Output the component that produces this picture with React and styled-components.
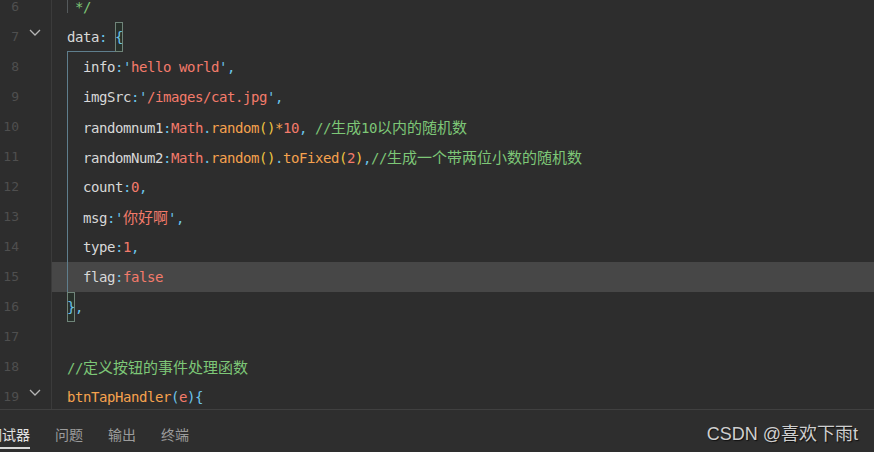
import React from 'react';
import styled, { createGlobalStyle, css } from 'styled-components';

const GlobalStyle = createGlobalStyle`
  html, body {
    margin: 0;
    padding: 0;
    background: #2d2d2d;
  }
  body {
    width: 874px;
    height: 452px;
    overflow: hidden;
  }
`;

const palette = {
  plain: '#d8d8d8',
  punct: '#6cc4ea',
  str: '#f47b6b',
  fn: '#f6a24e',
  paren: '#f0c640',
  comment: '#7dc777',
};

const Screen = styled.div`
  display: flex;
  flex-direction: column;
  height: 452px;
  background: #2d2d2d;
`;

const Editor = styled.div`
  height: 409px;
  overflow: hidden;
`;

const Lines = styled.div`
  margin-top: -8px;
`;

const Row = styled.div`
  display: flex;
  height: 30px;
`;

const Gutter = styled.div`
  display: flex;
  width: 51px;
  border-right: 1px solid #3b3b3b;
`;

const LineNo = styled.span`
  width: 19px;
  text-align: right;
  font-family: 'DejaVu Sans Mono', monospace;
  font-size: 13px;
  line-height: 30px;
  color: #4f4f4f;
`;

const Fold = styled.span`
  flex: 1;
  display: flex;
  justify-content: center;
  padding-top: 7px;
`;

const Code = styled.div`
  flex: 1;
  position: relative;
  padding-left: 15px;
  font-family: 'DejaVu Sans Mono', monospace;
  font-size: 14px;
  letter-spacing: -0.43px;
  line-height: 30px;
  white-space: pre;
  color: ${palette.plain};
  background: ${(p) => (p.$active ? '#474747' : 'transparent')};

  ${(p) =>
    p.$guide === 'full' &&
    css`
      &::before {
        content: '';
        position: absolute;
        left: 15px;
        top: 0;
        bottom: 0;
        width: 1px;
        background: #5f7e8d;
      }
    `}

  ${(p) =>
    p.$guide === 'short' &&
    css`
      &::before {
        content: '';
        position: absolute;
        left: 15px;
        top: 0;
        bottom: 9px;
        width: 1px;
        background: #555a5c;
      }
    `}

  ${(p) =>
    p.$guide === 'elbow' &&
    css`
      &::before {
        content: '';
        position: absolute;
        left: 15px;
        bottom: 0;
        width: 48px;
        height: 1px;
        background: #5f7e8d;
      }
    `}
`;

const Tok = styled.span`
  color: ${(p) => palette[p.$c] || palette.plain};
`;

const Cjk = styled.span`
  font-family: 'Noto Sans CJK SC', sans-serif;
  font-size: 15px;
  letter-spacing: 0;
`;

const Bracket = styled.span`
  display: inline-block;
  vertical-align: top;
  box-sizing: border-box;
  width: 8px;
  height: 30px;
  line-height: 28px;
  border: 1px solid #6f8479;
  background: #27302a;
  color: ${palette.punct};
  letter-spacing: 0;
  text-indent: -1px;
`;

const Panel = styled.div`
  flex: 1;
  display: flex;
  align-items: flex-start;
  padding-top: 14px;
  border-top: 1px solid #404040;
  background: #2e2e2e;
`;

const Tabs = styled.div`
  display: flex;
  gap: 25px;
  margin-left: -12px;
`;

const Tab = styled.span`
  font-family: 'Noto Sans CJK SC', sans-serif;
  font-size: 14px;
  line-height: 20px;
  padding-bottom: 3px;
  border-bottom: 2px solid ${(p) => (p.$active ? '#d8d8d8' : 'transparent')};
  color: ${(p) => (p.$active ? '#e2e2e2' : '#9c9c9c')};
`;

const Watermark = styled.span`
  margin-left: auto;
  margin-right: 16px;
  font-family: 'Liberation Sans', 'Noto Sans CJK SC', sans-serif;
  font-size: 18px;
  line-height: 20px;
  color: #cfcfcf;
  text-shadow: 1px 1px 1px #111;
`;

const Chevron = () => (
  <svg width="12" height="7" viewBox="0 0 12 7">
    <path d="M1 1 L6 6 L11 1" fill="none" stroke="#b5b5b5" strokeWidth="1.3" />
  </svg>
);

// split CJK runs so they get the wider font
const renderText = (text) =>
  text.split(/([\u4e00-\u9fff]+)/).map((part, i) =>
    /[\u4e00-\u9fff]/.test(part) ? <Cjk key={i}>{part}</Cjk> : part
  );

const lines = [
  { n: 6, guide: 'short', toks: [[' */', 'comment']] },
  { n: 7, fold: true, guide: 'elbow', toks: [['data', 'plain'], [':', 'punct'], [' ', 'plain'], ['{', 'bracket']] },
  {
    n: 8,
    guide: 'full',
    toks: [['  info', 'plain'], [":'", 'punct'], ['hello world', 'str'], ["',", 'punct']],
  },
  {
    n: 9,
    guide: 'full',
    toks: [['  imgSrc', 'plain'], [":'", 'punct'], ['/images/cat.jpg', 'str'], ["',", 'punct']],
  },
  {
    n: 10,
    guide: 'full',
    toks: [
      ['  randomnum1', 'plain'],
      [':', 'punct'],
      ['Math', 'str'],
      ['.', 'punct'],
      ['random', 'fn'],
      ['()', 'paren'],
      ['*', 'fn'],
      ['10', 'str'],
      [',', 'punct'],
      [' //生成10以内的随机数', 'comment'],
    ],
  },
  {
    n: 11,
    guide: 'full',
    toks: [
      ['  randomNum2', 'plain'],
      [':', 'punct'],
      ['Math', 'str'],
      ['.', 'punct'],
      ['random', 'fn'],
      ['()', 'paren'],
      ['.', 'punct'],
      ['toFixed', 'fn'],
      ['(', 'paren'],
      ['2', 'str'],
      [')', 'paren'],
      [',', 'punct'],
      ['//生成一个带两位小数的随机数', 'comment'],
    ],
  },
  { n: 12, guide: 'full', toks: [['  count', 'plain'], [':', 'punct'], ['0', 'str'], [',', 'punct']] },
  { n: 13, guide: 'full', toks: [['  msg', 'plain'], [":'", 'punct'], ['你好啊', 'str'], ["',", 'punct']] },
  { n: 14, guide: 'full', toks: [['  type', 'plain'], [':', 'punct'], ['1', 'str'], [',', 'punct']] },
  { n: 15, guide: 'full', active: true, toks: [['  flag', 'plain'], [':', 'punct'], ['false', 'str']] },
  { n: 16, toks: [['}', 'bracket'], [',', 'punct']] },
  { n: 17, toks: [] },
  { n: 18, toks: [['//定义按钮的事件处理函数', 'comment']] },
  {
    n: 19,
    fold: true,
    toks: [
      ['btnTapHandler', 'fn'],
      ['(', 'punct'],
      ['e', 'str'],
      [')', 'punct'],
      ['{', 'punct'],
    ],
  },
];

const App = () => (
  <Screen>
    <GlobalStyle />
    <Editor>
      <Lines>
        {lines.map((line) => (
          <Row key={line.n}>
            <Gutter>
              <LineNo>{line.n}</LineNo>
              <Fold>{line.fold && <Chevron />}</Fold>
            </Gutter>
            <Code $active={line.active} $guide={line.guide}>
              {line.toks.map(([text, c], i) =>
                c === 'bracket' ? (
                  <Bracket key={i}>{text}</Bracket>
                ) : (
                  <Tok key={i} $c={c}>
                    {renderText(text)}
                  </Tok>
                )
              )}
            </Code>
          </Row>
        ))}
      </Lines>
    </Editor>
    <Panel>
      <Tabs>
        <Tab $active>调试器</Tab>
        <Tab>问题</Tab>
        <Tab>输出</Tab>
        <Tab>终端</Tab>
      </Tabs>
      <Watermark>CSDN @喜欢下雨t</Watermark>
    </Panel>
  </Screen>
);

export default App;
